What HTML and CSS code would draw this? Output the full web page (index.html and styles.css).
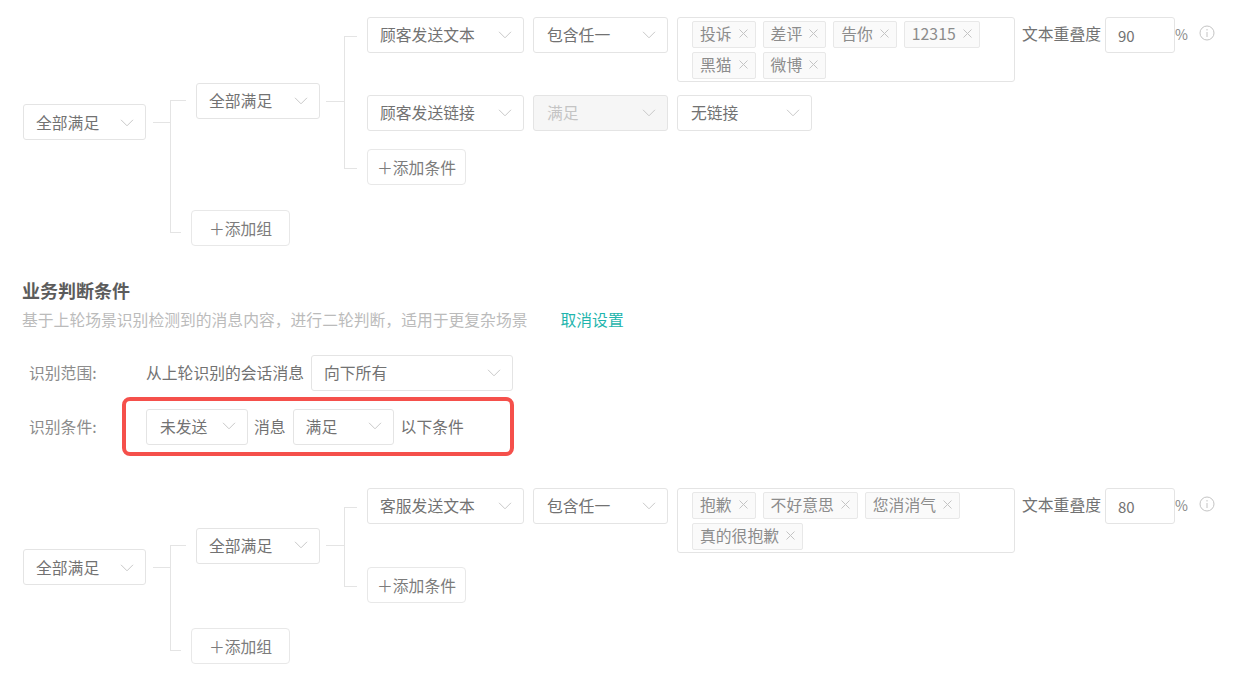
FILE: index.html
```html
<!DOCTYPE html>
<html lang="zh-CN">
<head>
    <meta charset="UTF-8">
    <title>业务判断条件</title>
    <link rel="stylesheet" href="styles.css">
</head>
<body>
    <svg class="defs" width="0" height="0">
        <symbol id="chev" viewBox="0 0 14 8"><path d="M1 .8l6 6 6-6"/></symbol>
        <symbol id="close" viewBox="0 0 9 9"><path d="M.5.5l8 8M8.5.5l-8 8"/></symbol>
    </svg>

    <!-- first tree -->
    <div class="tree tree-first">
        <div class="sel w-root root-sel"><span>全部满足</span><svg class="chev"><use href="#chev"/></svg></div>
        <div class="stub"></div>
        <div class="groups">
            <div class="group-row">
                <div class="sel w-group"><span>全部满足</span><svg class="chev"><use href="#chev"/></svg></div>
                <div class="stub stub-b"></div>
                <div class="conds">
                    <div class="cond">
                        <div class="sel w-field"><span>顾客发送文本</span><svg class="chev"><use href="#chev"/></svg></div>
                        <div class="sel w-op"><span>包含任一</span><svg class="chev"><use href="#chev"/></svg></div>
                        <div class="tags">
                            <span class="tag">投诉<svg class="tag-x"><use href="#close"/></svg></span>
                            <span class="tag">差评<svg class="tag-x"><use href="#close"/></svg></span>
                            <span class="tag">告你<svg class="tag-x"><use href="#close"/></svg></span>
                            <span class="tag">12315<svg class="tag-x"><use href="#close"/></svg></span>
                            <span class="tag">黑猫<svg class="tag-x"><use href="#close"/></svg></span>
                            <span class="tag">微博<svg class="tag-x"><use href="#close"/></svg></span>
                        </div>
                        <span class="overlap">文本重叠度</span>
                        <div class="num">90</div>
                        <span class="pct">%</span>
                        <svg class="info" viewBox="0 0 16 16"><circle cx="8" cy="8" r="7"/><path d="M8 7v5M8 4v1.5"/></svg>
                    </div>
                    <div class="cond">
                        <div class="sel w-field"><span>顾客发送链接</span><svg class="chev"><use href="#chev"/></svg></div>
                        <div class="sel w-op sel-off"><span>满足</span><svg class="chev"><use href="#chev"/></svg></div>
                        <div class="sel w-link"><span>无链接</span><svg class="chev"><use href="#chev"/></svg></div>
                    </div>
                    <div class="cond cond-add"><button class="add">＋添加条件</button></div>
                </div>
            </div>
            <div class="group-add"><button class="add">＋添加组</button></div>
        </div>
    </div>

    <!-- business conditions -->
    <div class="biz">
        <h3>业务判断条件</h3>
        <p class="biz-desc">基于上轮场景识别检测到的消息内容，进行二轮判断，适用于更复杂场景<a class="biz-link">取消设置</a></p>
        <div class="biz-row">
            <span class="biz-label">识别范围:</span>
            <span class="biz-text">从上轮识别的会话消息</span>
            <div class="sel w-scope"><span>向下所有</span><svg class="chev"><use href="#chev"/></svg></div>
        </div>
        <div class="biz-row biz-row-mark">
            <span class="biz-label">识别条件:</span>
            <div class="mark">
                <div class="sel w-send"><span>未发送</span><svg class="chev"><use href="#chev"/></svg></div>
                <span>消息</span>
                <div class="sel w-meet"><span>满足</span><svg class="chev"><use href="#chev"/></svg></div>
                <span>以下条件</span>
            </div>
        </div>
    </div>

    <!-- second tree -->
    <div class="tree tree-second">
        <div class="sel w-root root-sel"><span>全部满足</span><svg class="chev"><use href="#chev"/></svg></div>
        <div class="stub"></div>
        <div class="groups">
            <div class="group-row">
                <div class="sel w-group"><span>全部满足</span><svg class="chev"><use href="#chev"/></svg></div>
                <div class="stub stub-b"></div>
                <div class="conds">
                    <div class="cond">
                        <div class="sel w-field"><span>客服发送文本</span><svg class="chev"><use href="#chev"/></svg></div>
                        <div class="sel w-op"><span>包含任一</span><svg class="chev"><use href="#chev"/></svg></div>
                        <div class="tags">
                            <span class="tag">抱歉<svg class="tag-x"><use href="#close"/></svg></span>
                            <span class="tag">不好意思<svg class="tag-x"><use href="#close"/></svg></span>
                            <span class="tag">您消消气<svg class="tag-x"><use href="#close"/></svg></span>
                            <span class="tag">真的很抱歉<svg class="tag-x"><use href="#close"/></svg></span>
                        </div>
                        <span class="overlap">文本重叠度</span>
                        <div class="num">80</div>
                        <span class="pct">%</span>
                        <svg class="info" viewBox="0 0 16 16"><circle cx="8" cy="8" r="7"/><path d="M8 7v5M8 4v1.5"/></svg>
                    </div>
                    <div class="cond cond-add"><button class="add">＋添加条件</button></div>
                </div>
            </div>
            <div class="group-add"><button class="add">＋添加组</button></div>
        </div>
    </div>
</body>
</html>
```

FILE: styles.css
```css
body {
    margin: 0;
    padding: 17px 0 0 23px;
    background: #fff;
    color: #727272;
    font-family: "Noto Sans CJK SC", "Noto Sans", sans-serif;
    font-size: 15.8px;
    line-height: 22px;
    overflow: hidden;
}

.defs {
    position: absolute;
}

/* selects */
.sel {
    display: flex;
    flex: none;
    align-items: center;
    justify-content: space-between;
    box-sizing: border-box;
    height: 36px;
    padding: 0 11px 0 12px;
    background: #fff;
    border: 1px solid #e4e4e4;
    border-radius: 3px;
}

.chev {
    flex: none;
    width: 14px;
    height: 8px;
    margin-bottom: 1px;
    fill: none;
    stroke: #c8c8c8;
    stroke-width: 1;
}

.sel-off {
    background: #f6f6f6;
    color: #c4c4c4;
}

.w-root { width: 123px; }
.w-group { width: 124px; }
.w-field { width: 157px; }
.w-op { width: 135px; padding-left: 13px; }
.w-link { width: 135px; padding-left: 13px; }
.w-scope { width: 202px; }
.w-send { width: 102px; padding-left: 13px; }
.w-meet { width: 101px; margin: 0 1px; }

/* tree */
.tree {
    display: flex;
    align-items: flex-start;
}

.tree-first .root-sel { margin-top: 87px; }
.tree-second .root-sel { margin-top: 61px; }

.root-sel {
    padding-top: 2px;
}

.stub {
    flex: none;
    width: 17px;
    height: 1px;
    margin-left: 7px;
    background: #e4e4e4;
}

.tree-first > .stub { margin-top: 105px; }
.tree-second > .stub { margin-top: 79px; }

.stub-b {
    width: 18px;
    margin-left: 6px;
}

.groups {
    position: relative;
    display: flex;
    flex-direction: column;
    gap: 25px;
}

.groups::before {
    content: "";
    position: absolute;
    left: 0;
    bottom: 13px;
    width: 1px;
    background: #e4e4e4;
}

.tree-first .groups::before { top: 83px; }
.tree-second .groups::before { top: 57px; }

.group-row {
    position: relative;
    display: flex;
    align-items: center;
    padding-left: 26px;
}

.group-row::before, .group-add::before {
    content: "";
    position: absolute;
    left: 0;
    height: 1px;
    background: #e4e4e4;
}

.group-row::before {
    top: calc(50% - 1px);
    width: 16px;
}

.group-add {
    position: relative;
    padding-left: 21px;
}

.group-add::before {
    bottom: 13px;
    width: 11px;
}

.conds {
    position: relative;
    display: flex;
    flex-direction: column;
    gap: 13px;
    padding-left: 23px;
}

.conds::before {
    content: "";
    position: absolute;
    left: 0;
    top: 19px;
    bottom: 16px;
    width: 1px;
    background: #e4e4e4;
}

.cond {
    position: relative;
    display: flex;
    align-items: flex-start;
    gap: 9px;
}

.cond::before {
    content: "";
    position: absolute;
    left: -23px;
    top: 19px;
    width: 13px;
    height: 1px;
    background: #e4e4e4;
}

.cond + .cond::before {
    display: none;
}

.cond-add {
    margin-top: 5px;
}

.tree-second .cond-add {
    margin-top: 1px;
}

.cond-add.cond::before {
    display: block;
}

.add {
    box-sizing: border-box;
    width: 99px;
    height: 36px;
    padding: 2px 0 0;
    background: #fff;
    border: 1px solid #e8e8e8;
    border-radius: 4px;
    color: #7c7c7c;
    font: inherit;
}

/* tags */
.tags {
    display: flex;
    flex-wrap: wrap;
    flex: none;
    align-content: flex-start;
    gap: 4px 7px;
    box-sizing: border-box;
    width: 338px;
    height: 65px;
    padding: 3px 14px;
    border: 1px solid #e4e4e4;
    border-radius: 3px;
}

.tag {
    display: inline-flex;
    align-items: center;
    box-sizing: border-box;
    height: 27px;
    padding: 0 7px 2px 7px;
    background: #fafafa;
    border: 1px solid #e8e8e8;
    border-radius: 2px;
    color: #8c8c8c;
}

.tag-x {
    flex: none;
    width: 9px;
    height: 9px;
    margin: 0 0 1px 7px;
    fill: none;
    stroke: #c4c4c4;
    stroke-width: 1;
}

.overlap {
    margin-left: -2px;
    line-height: 34px;
}

.num {
    box-sizing: border-box;
    width: 70px;
    height: 36px;
    margin-left: -5px;
    padding-left: 12px;
    border: 1px solid #e4e4e4;
    border-radius: 3px;
    line-height: 36px;
    font-size: 15px;
}

.pct {
    margin-left: -9px;
    color: #888;
    font-size: 14px;
    line-height: 34px;
}

.info {
    width: 16px;
    height: 16px;
    margin: 8px 0 0 2px;
    fill: none;
    stroke: #c4c4c4;
    stroke-width: 1;
}

/* business section */
.biz {
    margin: 31px 0 0 -1px;
}

.biz h3 {
    margin: 0;
    color: #5c5c5c;
    font-size: 18px;
    font-weight: 700;
    line-height: 26px;
}

.biz-desc {
    margin: 5px 0 23px;
    color: #bbb;
    line-height: 24px;
}

.biz-link {
    margin-left: 33px;
    color: #1fb5ad;
}

.biz-row {
    display: flex;
    align-items: center;
    padding-left: 7px;
}

.biz-label {
    width: 93px;
    flex: none;
    color: #8c8c8c;
}

.biz-row-mark {
    margin-top: 6px;
}

.biz-text {
    margin: 0 7px 0 24px;
}

.mark {
    display: flex;
    align-items: center;
    gap: 6px;
    box-sizing: border-box;
    height: 59px;
    width: 392px;
    padding-left: 20px;
    border: 4px solid #f5504b;
    border-radius: 8px;
}

.tree-second {
    margin-top: 32px;
}
```
